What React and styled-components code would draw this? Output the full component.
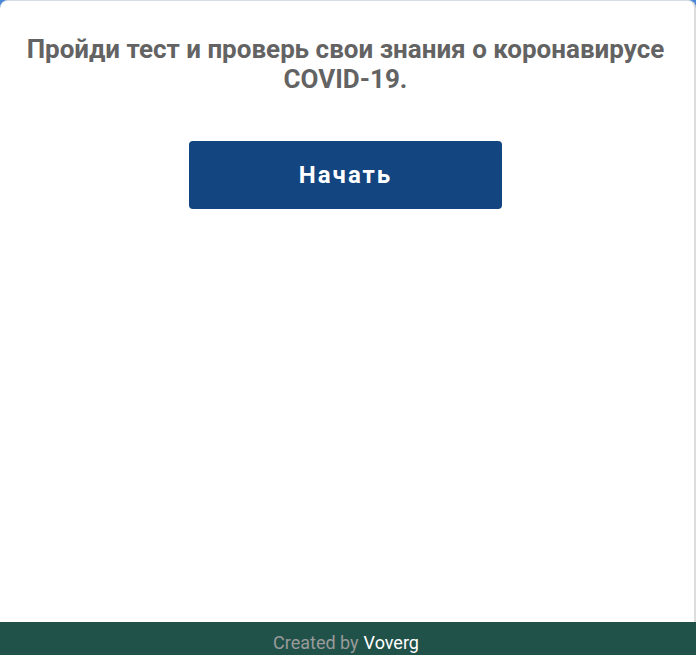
import React from "react";
import styled, { createGlobalStyle } from "styled-components";

const GlobalStyle = createGlobalStyle`
  html, body {
    margin: 0;
    padding: 0;
    background: #4a86d6;
    font-family: Roboto, "Liberation Sans", sans-serif;
  }
`;

const Page = styled.div`
  display: flex;
  flex-direction: column;
  height: 655px;
`;

const Card = styled.div`
  flex: 1;
  background: #ffffff;
  border-top: 1px solid #d3dde8;
  border-right: 2px solid #dcdcdc;
  border-radius: 8px 8px 0 0;
  display: flex;
  flex-direction: column;
  align-items: center;
  padding: 33px 21px 0 18px;
`;

const Title = styled.h1`
  margin: 0;
  font-size: 26px;
  line-height: 30px;
  font-weight: 700;
  color: #636363;
  text-align: center;
`;

const StartButton = styled.button`
  margin-top: 47px;
  width: 313px;
  height: 68px;
  border: none;
  border-radius: 4px;
  background: #134580;
  color: #ffffff;
  font-family: Roboto, "Liberation Sans", sans-serif;
  font-size: 24px;
  font-weight: 700;
  letter-spacing: 2px;
  cursor: pointer;
`;

const Footer = styled.footer`
  height: 33px;
  padding-right: 4px;
  background: #21524a;
  display: flex;
  align-items: flex-end;
  justify-content: center;
  font-size: 18px;
  line-height: 24px;
  color: #9a9a9a;
`;

const Author = styled.span`
  color: #ffffff;
  margin-left: 5px;
`;

export default function App() {
  return (
    <Page>
      <GlobalStyle />
      <Card>
        <Title>Пройди тест и проверь свои знания о коронавирусе COVID-19.</Title>
        <StartButton>Начать</StartButton>
      </Card>
      <Footer>
        Created by<Author>Voverg</Author>
      </Footer>
    </Page>
  );
}
